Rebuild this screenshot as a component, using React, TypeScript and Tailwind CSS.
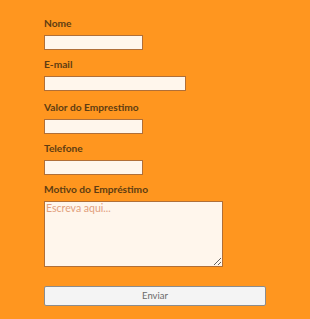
import React from "react";

const font = { fontFamily: 'Lato, "DejaVu Sans", sans-serif' };

function Field({ label, width, className = "" }: { label: string; width: string; className?: string }) {
  return (
    <div className={`flex flex-col ${className}`}>
      <label className="block h-[12px] text-[10.2px] leading-[13px] font-bold text-[#5e3d12]">{label}</label>
      <input
        type="text"
        className={`mt-[6px] h-[15px] ${width} border border-[#b06f38] bg-[#fff6ec] outline-none`}
      />
    </div>
  );
}

export default function App() {
  return (
    <div className="min-h-[319px] w-full bg-[#ff961f] pl-[44px] pt-[17px]" style={font}>
      <form className="flex flex-col" onSubmit={(e) => e.preventDefault()}>
        <Field label="Nome" width="w-[99px]" />
        <Field label="E-mail" width="w-[142px]" className="mt-[8px]" />
        <Field label="Valor do Emprestimo" width="w-[99px]" className="mt-[10px]" />
        <Field label="Telefone" width="w-[99px]" className="mt-[8px]" />

        <div className="mt-[8px] flex flex-col">
          <label className="block h-[12px] text-[10.2px] leading-[13px] font-bold text-[#5e3d12]">
            Motivo do Empréstimo
          </label>
          <textarea
            placeholder="Escreva aqui..."
            className="mt-[6px] h-[66px] w-[179px] border border-[#b06f38] bg-[#fff6ec] px-[1px] py-0 text-[10.5px] leading-[12px] outline-none placeholder:text-[#e2a07c]"
          />
        </div>

        <button
          type="submit"
          className="mt-[19px] h-[20px] w-[222px] rounded-[2px] border border-[#8c8c8c] bg-[#f4f4f4] text-[9.5px] text-[#6a6a6a]"
        >
          Enviar
        </button>
      </form>
    </div>
  );
}
